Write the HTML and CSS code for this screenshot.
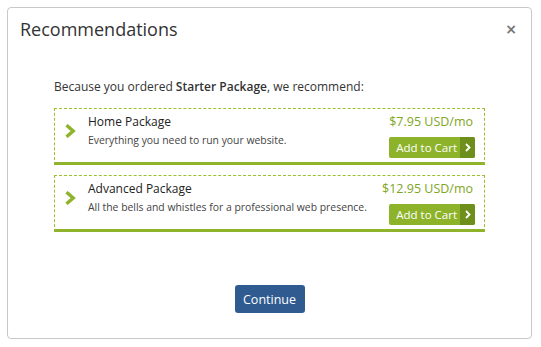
FILE: index.html
```html
<!DOCTYPE html>
<html lang="en">
<head>
  <meta charset="UTF-8">
  <title>Recommendations</title>
  <link rel="stylesheet" href="styles.css">
</head>
<body>
  <div class="modal">
    <div class="modal-header">
      <h4 class="modal-title">Recommendations</h4>
      <button class="close">&times;</button>
    </div>
    <div class="modal-body">
      <p class="intro">Because you ordered <strong>Starter Package</strong>, we recommend:</p>
      <div class="product">
        <span class="chev"><svg width="11" height="14" viewBox="0 0 11 14"><path d="M1.5 1.2 L8.2 7 L1.5 12.8" fill="none" stroke="#8fb42b" stroke-width="3.4"/></svg></span>
        <div class="info">
          <div class="name">Home Package</div>
          <div class="desc">Everything you need to run your website.</div>
        </div>
        <div class="buy">
          <div class="price">$7.95 USD/mo</div>
          <button class="cart">Add to Cart<span class="arrow"><svg width="6" height="9" viewBox="0 0 6 9"><path d="M1 1 L4.5 4.5 L1 8" fill="none" stroke="#fff" stroke-width="1.8"/></svg></span></button>
        </div>
      </div>
      <div class="product">
        <span class="chev"><svg width="11" height="14" viewBox="0 0 11 14"><path d="M1.5 1.2 L8.2 7 L1.5 12.8" fill="none" stroke="#8fb42b" stroke-width="3.4"/></svg></span>
        <div class="info">
          <div class="name">Advanced Package</div>
          <div class="desc">All the bells and whistles for a professional web presence.</div>
        </div>
        <div class="buy">
          <div class="price">$12.95 USD/mo</div>
          <button class="cart">Add to Cart<span class="arrow"><svg width="6" height="9" viewBox="0 0 6 9"><path d="M1 1 L4.5 4.5 L1 8" fill="none" stroke="#fff" stroke-width="1.8"/></svg></span></button>
        </div>
      </div>
    </div>
    <div class="modal-footer">
      <button class="continue">Continue</button>
    </div>
  </div>
</body>
</html>
```

FILE: styles.css
```css
body {
  margin: 0;
  background-color: #fff;
  font-family: "Open Sans", sans-serif;
  color: #333;
}
.modal {
  margin: 7px 0 0 7px;
  width: 525px;
  height: 332px;
  box-sizing: border-box;
  border: 1px solid #c8c8c8;
  border-radius: 4px;
  display: flex;
  flex-direction: column;
}
.modal-header {
  display: flex;
  justify-content: space-between;
  align-items: center;
  padding: 8px 12px 0 12px;
}
.modal-title {
  margin: 0;
  font-size: 18px;
  font-weight: normal;
  line-height: 26px;
  color: #333;
}
.close {
  border: none;
  background: none;
  padding: 0;
  margin-right: 2px;
  font-family: "DejaVu Sans", sans-serif;
  font-size: 14px;
  font-weight: bold;
  color: #777;
  line-height: 20px;
}
.modal-body {
  padding: 0 46px;
  flex-grow: 1;
}
.intro {
  margin: 36px 0 12px 0;
  font-size: 12px;
  line-height: 18px;
}
.intro strong {
  font-weight: 600;
}
.product {
  display: flex;
  align-items: flex-start;
  border: 1px dashed #9cbf2f;
  border-bottom: 3px solid #8fb42b;
  padding: 5px 9px 4px 10px;
  margin-bottom: 10px;
}
.chev {
  width: 23px;
  display: flex;
  margin-top: 10px;
}
.info {
  flex-grow: 1;
}
.name {
  font-size: 12px;
  line-height: 16px;
  color: #222;
}
.desc {
  font-size: 10.4px;
  line-height: 15px;
  color: #444;
  margin-top: 3px;
}
.buy {
  text-align: right;
}
.price {
  font-size: 12.5px;
  line-height: 16px;
  color: #7fa523;
  margin-right: 2px;
  margin-bottom: 5px;
}
.cart {
  display: inline-flex;
  align-items: stretch;
  height: 21px;
  padding: 0 0 0 7px;
  border: none;
  border-radius: 2px;
  background-color: #8db32b;
  color: #fff;
  font-family: "Open Sans", sans-serif;
  font-size: 11.5px;
  line-height: 21px;
  overflow: hidden;
}
.arrow {
  margin-left: 3px;
  width: 15px;
  background-color: #6f8f1c;
  display: flex;
  align-items: center;
  justify-content: center;
}
.modal-footer {
  text-align: center;
  padding-bottom: 25px;
}
.continue {
  width: 70px;
  height: 28px;
  border: none;
  border-radius: 3px;
  background-color: #2f5b91;
  color: #fff;
  font-family: "Open Sans", sans-serif;
  font-size: 12.5px;
}
```
